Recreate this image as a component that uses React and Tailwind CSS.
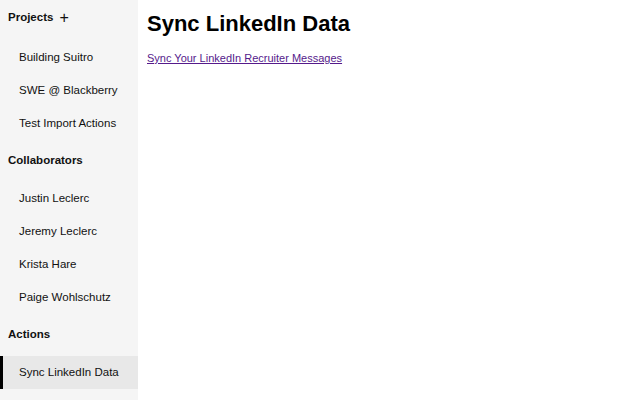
export default function App() {
  const font = { fontFamily: '"Liberation Sans", Arial, sans-serif' };
  const Item = ({ children, active }) => (
    <div
      className={
        "h-[33px] flex items-center text-[11.5px] text-[#111] " +
        (active ? "bg-[#e8e8e8] border-l-[3px] border-black pl-[16px]" : "pl-[19px]")
      }
    >
      {children}
    </div>
  );
  const Header = ({ children }) => (
    <div className="h-[37px] flex items-center pl-[8px] text-[11.5px] font-bold text-[#111]">{children}</div>
  );
  return (
    <div className="flex w-[640px] h-[400px] bg-white overflow-hidden" style={font}>
      <div className="w-[138px] shrink-0 bg-[#f5f5f5] flex flex-col">
        <div className="h-[36px] flex items-center pl-[8px] text-[11.5px] font-bold text-[#111]">
          Projects
          <span className="ml-[6px] font-normal text-[16px] leading-none">+</span>
        </div>
        <div className="h-[5px]" />
        <Item>Building Suitro</Item>
        <Item>SWE @ Blackberry</Item>
        <Item>Test Import Actions</Item>
        <div className="h-[2px]" />
        <Header>Collaborators</Header>
        <div className="h-[3px]" />
        <Item>Justin Leclerc</Item>
        <Item>Jeremy Leclerc</Item>
        <Item>Krista Hare</Item>
        <Item>Paige Wohlschutz</Item>
        <div className="h-[2px]" />
        <Header>Actions</Header>
        <div className="h-[3px]" />
        <Item active>Sync LinkedIn Data</Item>
      </div>
      <div className="pl-[9px] pt-[10px]">
        <h1 className="text-[22px] font-bold leading-[28px] text-black">Sync LinkedIn Data</h1>
        <a href="#" className="block mt-[12px] text-[11px] underline text-[#551a8b]">
          Sync Your LinkedIn Recruiter Messages
        </a>
      </div>
    </div>
  );
}
